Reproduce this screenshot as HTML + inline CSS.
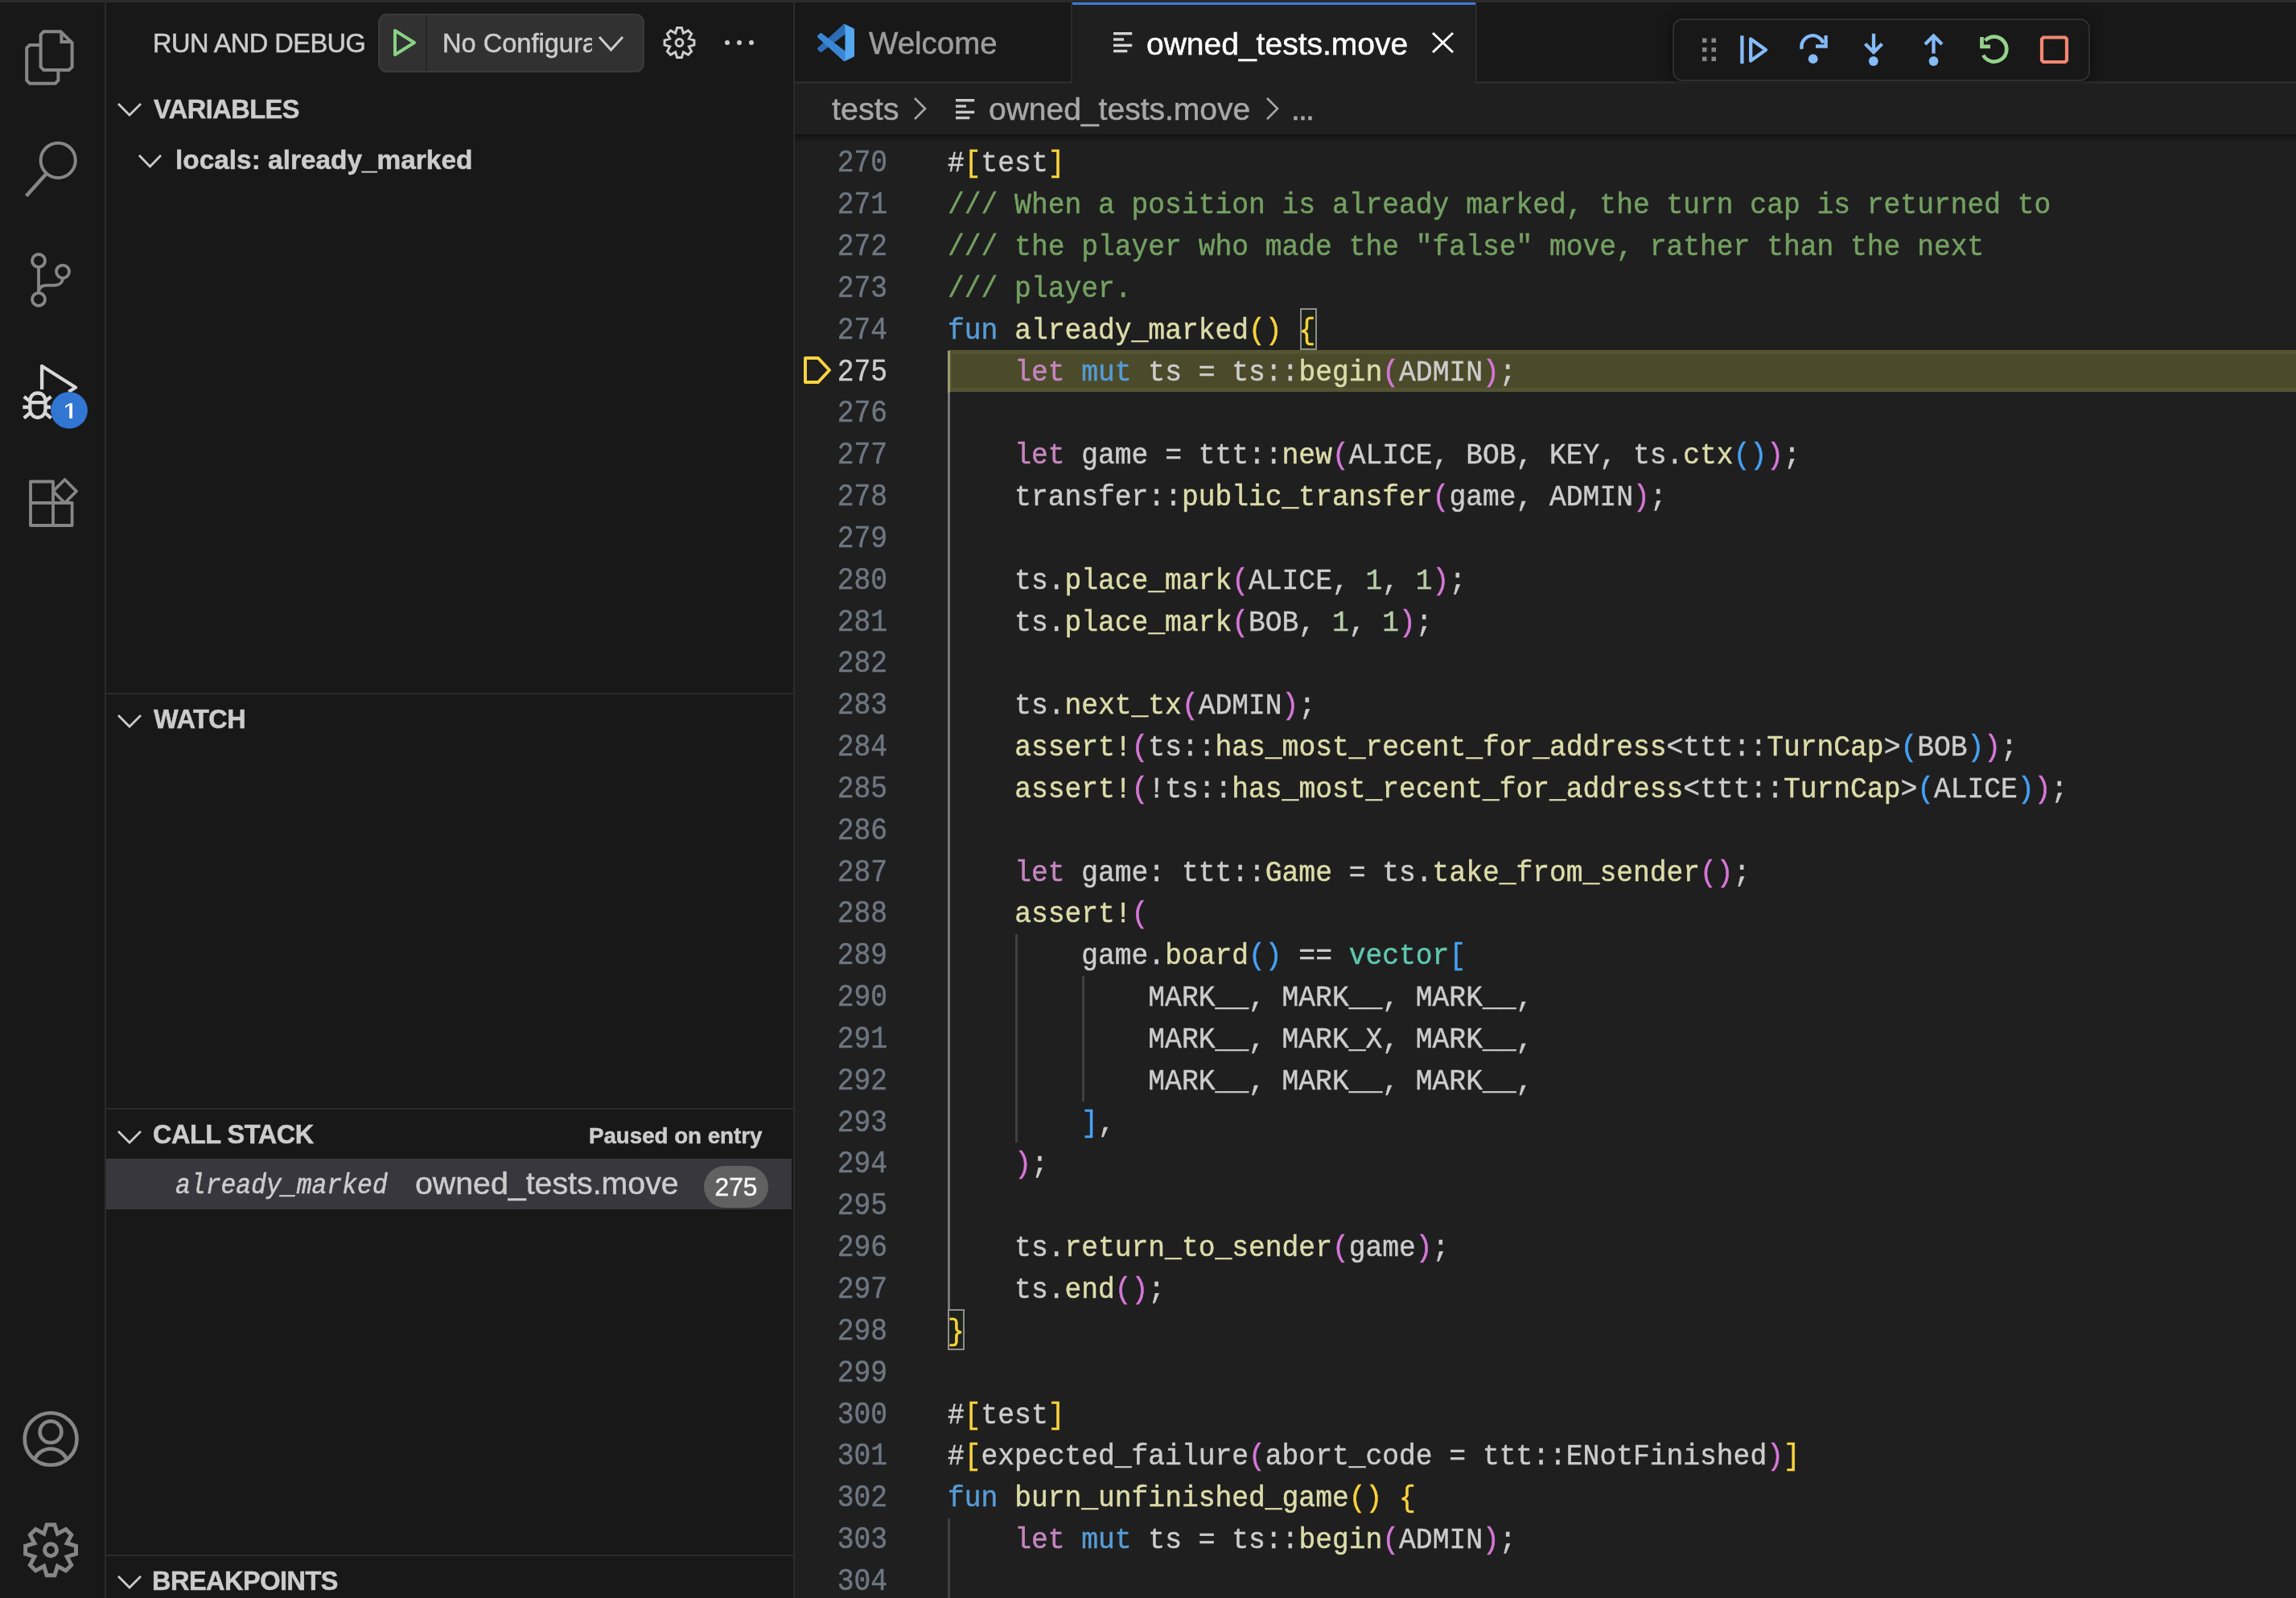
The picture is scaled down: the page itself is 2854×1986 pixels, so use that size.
<!DOCTYPE html>
<html><head><meta charset="utf-8">
<style>
*{margin:0;padding:0;box-sizing:border-box}
html,body{width:2854px;height:1986px;overflow:hidden;background:#181818;font-family:"Liberation Sans",sans-serif;color:#cccccc}
.a{position:absolute}
#topline{left:0;top:0;width:2854px;height:3px;background:#2b2b2b}
#actbar{left:0;top:3px;width:130px;height:1983px;background:#181818;border-right:2px solid #2b2b2b;width:132px}
#sidebar{left:132px;top:3px;width:854px;height:1983px;background:#181818;border-right:2px solid #2b2b2b;width:856px}
#tabbar{left:988px;top:3px;width:1866px;height:101px;background:#181818}
#tabbar .bb{left:0;top:98px;width:1866px;height:3px;background:#2b2b2b}
#crumbs{left:988px;top:104px;width:1866px;height:63px;background:#1f1f1f}
#editor{left:988px;top:167px;width:1866px;height:1819px;background:#1f1f1f;overflow:hidden}
#editor .shadow{left:0;top:0;width:1866px;height:10px;background:linear-gradient(#121212,rgba(31,31,31,0))}
.hdr{font-weight:bold;font-size:32.5px;letter-spacing:-0.5px;color:#cccccc;white-space:nowrap}
.code{font-family:"Liberation Mono",monospace;font-size:34.64px;line-height:51.84px;white-space:pre;color:#cccccc}

.ln{-webkit-text-stroke:0.45px currentColor;will-change:transform;transform:scaleY(1.12);transform-origin:0 36.9px;left:0;width:115px;text-align:right;font-family:"Liberation Mono",monospace;font-size:34.64px;line-height:51.84px;color:#6e7681;height:51.84px;padding-top:1.8px}
.ln.act{color:#cccccc}
.cl{-webkit-text-stroke:0.45px currentColor;will-change:transform;transform:scaleY(1.07);transform-origin:0 36.9px;left:190px;font-family:"Liberation Mono",monospace;font-size:34.64px;line-height:51.84px;white-space:pre;color:#cccccc;height:51.84px;padding-top:1.8px}
.hl{left:190px;width:1676px;background:#4b4b2b;border:5px solid #555432;border-right:none}
.ig{width:3px;background:#404040}
.bm{border:2.2px solid #8e8e8e;background:#1d231b}

.t{position:absolute;white-space:nowrap;line-height:1;will-change:transform;-webkit-text-stroke:0.5px currentColor}
.sep{position:absolute;left:132px;width:854px;height:2px;background:#2b2b2b}
</style></head><body>
<div id="topline" class="a"></div>
<div id="actbar" class="a">
<svg class="a" style="left:0;top:-3px" width="130" height="700" viewBox="0 0 130 700">
 <g fill="none" stroke="#868686" stroke-width="4" stroke-linejoin="miter">
  <path d="M50.6 55.9 H37 L33.2 59.7 V100 L37 103.8 H68.6 L72.4 100 V88.9"/>
  <path d="M54.4 39.2 H75.4 L89.6 53.4 V83.1 L85.8 86.9 H54.4 L50.6 83.1 V43 Z"/>
  <path d="M76.4 39.2 V51.9 H89.6"/>
  <circle cx="72.2" cy="199.3" r="21.6"/>
  <path d="M57.5 216 L32.7 243.5" stroke-width="4.6"/>
  <circle cx="48" cy="324" r="8" stroke-width="3.8"/>
  <circle cx="48" cy="372" r="8" stroke-width="3.8"/>
  <circle cx="78" cy="337.6" r="8" stroke-width="3.8"/>
  <path d="M48 332 V364" stroke-width="3.8"/>
  <path d="M78 345.6 C78 351 74 354.6 67 354.6 H58 C52 354.6 48 357.5 48 364" stroke-width="3.8"/>
  <path d="M38 598.5 H66 V653 H38 Z M38 625 H89.6 V653 H66 M80.5 596 L95 610.5 L80.5 625 L66 610.5 Z" stroke-width="3.8" stroke-linejoin="round"/>
 </g>
 <g fill="none" stroke="#d7d7d7" stroke-width="4.3">
  <path d="M52.1 484 V455 L94 481.5 L85.4 487" stroke-linejoin="round"/>
  <path d="M37.3 499.5 C37.3 492 41.5 488.5 46.9 488.5 C52.3 488.5 56.5 492 56.5 499.5 V508 C56.5 514.5 52.3 519 46.9 519 C41.5 519 37.3 514.5 37.3 508 Z"/>
  <path d="M37.3 500.2 H56.5 M28.3 506 H36 M57.5 506 H63 M29.8 493 L37 498.5 M63.5 493 L56.5 498.5 M29.8 519.7 L37 513.5 M63.5 519.7 L56.5 513.5"/>
 </g>
 <circle cx="86" cy="509.9" r="22.9" fill="#3176d2"/>
 <path d="M81.3 507.2 L86.2 503.2 V520 H90 V501.2 H86.6 L81.3 504.2 Z" fill="#ffffff"/>
</svg>
<svg class="a" style="left:0;top:1697px" width="130" height="289" viewBox="0 1700 130 289">
 <g fill="none" stroke="#868686" stroke-width="4.6">
  <circle cx="63.1" cy="1788.4" r="32.4"/>
  <circle cx="63" cy="1779.6" r="13.4"/>
  <path d="M43.5 1812.5 A21.8 21.8 0 0 1 82.5 1812.5"/>
  <path d="M58.14 1894.88 L67.96 1894.88 L71.39 1906.16 L81.80 1900.61 L88.74 1907.55 L83.19 1917.96 L94.47 1921.39 L94.47 1931.21 L83.19 1934.64 L88.74 1945.05 L81.80 1951.99 L71.39 1946.44 L67.96 1957.72 L58.14 1957.72 L54.71 1946.44 L44.30 1951.99 L37.36 1945.05 L42.91 1934.64 L31.63 1931.21 L31.63 1921.39 L42.91 1917.96 L37.36 1907.55 L44.30 1900.61 L54.71 1906.16 Z" stroke-width="5" stroke-linejoin="miter" stroke-miterlimit="10"/>
  <circle cx="63.05" cy="1926.3" r="7.5" stroke-width="5"/>
 </g>
</svg>
</div>
<div id="sidebar" class="a"></div>
<div class="t" style="left:190px;top:37.5px;font-size:32.6px;letter-spacing:-0.55px;color:#cccccc">RUN AND DEBUG</div>
<div class="a" style="left:470px;top:17px;width:331px;height:73px;background:#313131;border:2px solid #3a3a3a;border-radius:11px"></div>
<div class="a" style="left:529px;top:19px;width:2px;height:69px;background:#262626"></div>
<svg class="a" style="left:480px;top:28px" width="50" height="50"><path d="M11 10 L35 25 L11 40 Z" fill="none" stroke="#89d185" stroke-width="4" stroke-linejoin="round"/></svg>
<div class="a" style="left:550px;top:30px;width:186px;height:50px;overflow:hidden"><div class="t" style="left:0;top:7.5px;font-size:32.6px;color:#cccccc">No Configuration</div></div>
<svg class="a" style="left:742px;top:43px" width="35" height="22"><path d="M3 3 L17.5 19 L32 3" fill="none" stroke="#cccccc" stroke-width="3"/></svg>
<svg class="a" style="left:819px;top:28px" width="52" height="52" viewBox="819 28 52 52"><g fill="none" stroke="#cccccc" stroke-width="3"><path d="M841.62 34.59 L847.38 34.59 L849.39 41.20 L855.48 37.95 L859.55 42.02 L856.30 48.11 L862.91 50.12 L862.91 55.88 L856.30 57.89 L859.55 63.98 L855.48 68.05 L849.39 64.80 L847.38 71.41 L841.62 71.41 L839.61 64.80 L833.52 68.05 L829.45 63.98 L832.70 57.89 L826.09 55.88 L826.09 50.12 L832.70 48.11 L829.45 42.02 L833.52 37.95 L839.61 41.20 Z" stroke-linejoin="miter" stroke-miterlimit="10"/><circle cx="844.5" cy="53" r="4.4"/></g></svg>
<div class="a" style="left:901px;top:49.7px;width:6px;height:6px;border-radius:3px;background:#cccccc"></div>
<div class="a" style="left:916px;top:49.7px;width:6px;height:6px;border-radius:3px;background:#cccccc"></div>
<div class="a" style="left:931px;top:49.7px;width:6px;height:6px;border-radius:3px;background:#cccccc"></div>
<svg class="a" style="left:144px;top:126px" width="34" height="20"><path d="M3 3 L17.0 17 L31 3" fill="none" stroke="#cccccc" stroke-width="2.8"/></svg>
<div class="t hdr" style="left:191px;top:119.6px">VARIABLES</div>
<svg class="a" style="left:170px;top:190px" width="33" height="20"><path d="M3 3 L16.5 17 L30 3" fill="none" stroke="#cccccc" stroke-width="2.8"/></svg>
<div class="t" style="left:218px;top:182px;font-size:33.4px;font-weight:bold;color:#cccccc">locals: already_marked</div>
<div class="sep" style="top:861px"></div>
<svg class="a" style="left:144px;top:886px" width="34" height="20"><path d="M3 3 L17.0 17 L31 3" fill="none" stroke="#cccccc" stroke-width="2.8"/></svg>
<div class="t hdr" style="left:191px;top:877.6px">WATCH</div>
<div class="sep" style="top:1377px"></div>
<svg class="a" style="left:144px;top:1403px" width="34" height="20"><path d="M3 3 L17.0 17 L31 3" fill="none" stroke="#cccccc" stroke-width="2.8"/></svg>
<div class="t hdr" style="left:190px;top:1393.6px">CALL STACK</div>
<div class="t" style="left:732px;top:1398px;font-size:27.7px;font-weight:bold;color:#cccccc">Paused on entry</div>
<div class="a" style="left:132px;top:1440px;width:852px;height:62.5px;background:#37373d"></div>
<div class="t" style="left:218px;top:1459px;transform:scaleY(1.1);transform-origin:0 24px;font-family:'Liberation Mono',monospace;font-style:italic;font-size:31.4px;color:#cccccc">already_marked</div>
<div class="t" style="left:516px;top:1451px;font-size:39.3px;color:#cccccc">owned_tests.move</div>
<div class="a" style="left:875px;top:1449px;width:80px;height:52px;border-radius:26px;background:#616161"></div>
<div class="t" style="left:875px;width:80px;text-align:center;top:1459.5px;font-size:31.7px;color:#f8f8f8">275</div>
<div class="sep" style="top:1932px"></div>
<svg class="a" style="left:144px;top:1956px" width="34" height="20"><path d="M3 3 L17.0 17 L31 3" fill="none" stroke="#cccccc" stroke-width="2.8"/></svg>
<div class="t hdr" style="left:189px;top:1948.6px">BREAKPOINTS</div>

<div id="tabbar" class="a"><div class="a bb"></div></div>
<div class="a" style="left:1331px;top:3px;width:2px;height:98px;background:#2b2b2b"></div>
<div class="a" style="left:1333px;top:3px;width:501px;height:101px;background:#1f1f1f"></div>
<div class="a" style="left:1333px;top:3px;width:501px;height:3px;background:#3a7dd7"></div>
<div class="a" style="left:1834px;top:3px;width:2px;height:98px;background:#2b2b2b"></div>
<svg class="a" style="left:1016px;top:30px" width="46" height="46" viewBox="0 0 100 100">
<path fill="#2c6cb3" d="M96.4614 10.7962L75.8569 0.875542C73.4719 -0.272773 70.6217 0.211611 68.75 2.08333L1.29858 63.5832C-0.515693 65.2373 -0.513607 68.0937 1.30308 69.7452L6.81272 74.754C8.29793 76.1042 10.5347 76.2036 12.1338 74.9905L93.3609 13.3699C96.086 11.3026 100 13.2462 100 16.6667V16.4275C100 14.0265 98.6246 11.8378 96.4614 10.7962Z"/>
<path fill="#3a86d4" d="M96.4614 89.2038L75.8569 99.1245C73.4719 100.273 70.6217 99.7884 68.75 97.9167L1.29858 36.4169C-0.515693 34.7627 -0.513607 31.9063 1.30308 30.2548L6.81272 25.246C8.29793 23.8958 10.5347 23.7964 12.1338 25.0095L93.3609 86.6301C96.086 88.6974 100 86.7538 100 83.3334V83.5726C100 85.9735 98.6246 88.1622 96.4614 89.2038Z"/>
<path fill="#52a7ef" d="M75.8578 99.1263C73.4721 100.274 70.6219 99.7885 68.75 97.9166C71.0564 100.223 75 98.5895 75 95.3278V4.67213C75 1.41039 71.0564 -0.223106 68.75 2.08329C70.6219 0.211402 73.4721 -0.273666 75.8578 0.873633L96.4587 10.7807C98.6234 11.8217 100 14.0112 100 16.4132V83.5871C100 85.9893 98.6234 88.1788 96.4586 89.2198L75.8578 99.1263Z"/>
</svg>
<div class="t" style="left:1080px;top:34.5px;font-size:38.5px;color:#9d9d9d">Welcome</div>
<svg class="a" style="left:1384px;top:40px" width="24" height="26"><g fill="#d4d4d4"><rect x="0" y="0" width="23.2" height="3.4"/><rect x="0" y="7.3" width="13" height="3.4"/><rect x="0" y="14.7" width="23.2" height="3.4"/><rect x="0" y="21.8" width="17.3" height="3.4"/></g></svg>
<div class="t" style="left:1425px;top:34.5px;font-size:39px;color:#ffffff">owned_tests.move</div>
<svg class="a" style="left:1778px;top:38px" width="31" height="30"><path d="M3 3 L28 27 M28 3 L3 27" stroke="#ffffff" stroke-width="3" fill="none"/></svg>
<div class="a" style="left:2079px;top:23px;width:519px;height:78px;background:#181818;border:2px solid #2e2e2e;border-radius:12px;box-shadow:0 0 14px rgba(0,0,0,0.55)"></div>
<svg class="a" style="left:2100px;top:30px" width="490" height="65" viewBox="2100 30 490 65">
 <g fill="#868686"><rect x="2116" y="47.5" width="5.5" height="5.5"/><rect x="2127.5" y="47.5" width="5.5" height="5.5"/><rect x="2116" y="59" width="5.5" height="5.5"/><rect x="2127.5" y="59" width="5.5" height="5.5"/><rect x="2116" y="70.5" width="5.5" height="5.5"/><rect x="2127.5" y="70.5" width="5.5" height="5.5"/></g>
 <g fill="none" stroke="#85bbf7" stroke-width="4.3">
  <path d="M2165.4 44.3 V79.1"/>
  <path d="M2176.2 48.5 L2195 62 L2176.2 75.5 Z" stroke-linejoin="round"/>
  <path d="M2239.6 61 A14 14 0 0 1 2266.5 53.5"/>
  <path d="M2257 57.5 H2269.6 V44" stroke-linejoin="miter"/>
  <path d="M2329 41.8 V64 M2318.5 54.5 L2329 65 L2339.5 54.5"/>
  <path d="M2403.5 66.6 V45 M2393 55 L2403.5 44.5 L2414 55"/>
 </g>
 <g fill="none" stroke="#95d28c" stroke-width="4.7">
  <path d="M2467.6 50.5 A15.45 15.45 0 1 1 2465.2 68.5"/>
  <path d="M2463.5 46 V57.8 H2474" stroke-linejoin="miter"/>
 </g>
 <g fill="#85bbf7"><circle cx="2253.7" cy="73.2" r="5.9"/><circle cx="2328.8" cy="76" r="5.9"/><circle cx="2403.5" cy="76" r="5.9"/></g>
 <path d="M2540 46.5 H2567 L2569 48.5 V75 L2567 77 H2540 L2538 75 V48.5 Z" fill="none" stroke="#f48771" stroke-width="4.2"/>
</svg>
<div id="crumbs" class="a"></div>
<div class="t" style="left:1034px;top:115.5px;font-size:39.6px;color:#a8a8a8">tests</div>
<svg class="a" style="left:1134px;top:119px" width="19" height="32"><path d="M3 3 L16 16.0 L3 29" fill="none" stroke="#a8a8a8" stroke-width="2.6"/></svg>
<svg class="a" style="left:1188px;top:122.5px" width="24" height="26"><g fill="#c8c8c8"><rect x="0" y="0" width="23.2" height="3.4"/><rect x="0" y="7.3" width="13" height="3.4"/><rect x="0" y="14.7" width="23.2" height="3.4"/><rect x="0" y="21.8" width="17.3" height="3.4"/></g></svg>
<div class="t" style="left:1229px;top:115.5px;font-size:39px;color:#a8a8a8">owned_tests.move</div>
<svg class="a" style="left:1572px;top:119px" width="19" height="32"><path d="M3 3 L16 16.0 L3 29" fill="none" stroke="#a8a8a8" stroke-width="2.6"/></svg>
<div class="t" style="left:1605px;top:115.5px;font-size:39px;letter-spacing:-1.8px;color:#a8a8a8">...</div>
<div id="editor" class="a">
<div class="a hl" style="top:267.5px;height:52.2px"></div>
<div class="a ig" style="left:190px;top:268.6px;height:1191px;background:#777777"></div>
<div class="a ig" style="left:190px;top:268.6px;height:52px;background:#9a9a70"></div>
<div class="a ig" style="left:274px;top:994.3px;height:259.2px"></div>
<div class="a ig" style="left:357px;top:1046.1px;height:155.5px"></div>
<div class="a ig" style="left:190px;top:1720px;height:110px"></div>
<div class="a bm" style="left:628px;top:215.8px;width:20.5px;height:52px"></div>
<div class="a bm" style="left:190px;top:1460.2px;width:20.8px;height:51.2px"></div>
<svg class="a" style="left:9px;top:274px" width="38" height="40" viewBox="0 0 38 40"><path d="M4 4 H20 L34 19 L20 34 H4 Z" fill="none" stroke="#fcd440" stroke-width="3.9" stroke-linejoin="round"/></svg>
<div class="a ln" style="top:9.30px">270</div>
<div class="a cl" style="top:9.30px">#<span style="color:#f9d33c">[</span>test<span style="color:#f9d33c">]</span></div>
<div class="a ln" style="top:61.14px">271</div>
<div class="a cl" style="top:61.14px"><span style="color:#74a062">/// When a position is already marked, the turn cap is returned to</span></div>
<div class="a ln" style="top:112.98px">272</div>
<div class="a cl" style="top:112.98px"><span style="color:#74a062">/// the player who made the "false" move, rather than the next</span></div>
<div class="a ln" style="top:164.82px">273</div>
<div class="a cl" style="top:164.82px"><span style="color:#74a062">/// player.</span></div>
<div class="a ln" style="top:216.66px">274</div>
<div class="a cl" style="top:216.66px"><span style="color:#569cd6">fun</span> <span style="color:#dcdcaa">already_marked</span><span style="color:#f9d33c">()</span> <span style="color:#f9d33c">{</span></div>
<div class="a ln act" style="top:268.50px">275</div>
<div class="a cl" style="top:268.50px">    <span style="color:#c586c0">let</span> <span style="color:#569cd6">mut</span> ts = ts::<span style="color:#dcdcaa">begin</span><span style="color:#d677d8">(</span>ADMIN<span style="color:#d677d8">)</span>;</div>
<div class="a ln" style="top:320.34px">276</div>
<div class="a cl" style="top:320.34px"></div>
<div class="a ln" style="top:372.18px">277</div>
<div class="a cl" style="top:372.18px">    <span style="color:#c586c0">let</span> game = ttt::<span style="color:#dcdcaa">new</span><span style="color:#d677d8">(</span>ALICE, BOB, KEY, ts.<span style="color:#dcdcaa">ctx</span><span style="color:#45a1f6">()</span><span style="color:#d677d8">)</span>;</div>
<div class="a ln" style="top:424.02px">278</div>
<div class="a cl" style="top:424.02px">    transfer::<span style="color:#dcdcaa">public_transfer</span><span style="color:#d677d8">(</span>game, ADMIN<span style="color:#d677d8">)</span>;</div>
<div class="a ln" style="top:475.86px">279</div>
<div class="a cl" style="top:475.86px"></div>
<div class="a ln" style="top:527.70px">280</div>
<div class="a cl" style="top:527.70px">    ts.<span style="color:#dcdcaa">place_mark</span><span style="color:#d677d8">(</span>ALICE, <span style="color:#b5cea8">1</span>, <span style="color:#b5cea8">1</span><span style="color:#d677d8">)</span>;</div>
<div class="a ln" style="top:579.54px">281</div>
<div class="a cl" style="top:579.54px">    ts.<span style="color:#dcdcaa">place_mark</span><span style="color:#d677d8">(</span>BOB, <span style="color:#b5cea8">1</span>, <span style="color:#b5cea8">1</span><span style="color:#d677d8">)</span>;</div>
<div class="a ln" style="top:631.38px">282</div>
<div class="a cl" style="top:631.38px"></div>
<div class="a ln" style="top:683.22px">283</div>
<div class="a cl" style="top:683.22px">    ts.<span style="color:#dcdcaa">next_tx</span><span style="color:#d677d8">(</span>ADMIN<span style="color:#d677d8">)</span>;</div>
<div class="a ln" style="top:735.06px">284</div>
<div class="a cl" style="top:735.06px">    <span style="color:#dcdcaa">assert!</span><span style="color:#d677d8">(</span>ts::<span style="color:#dcdcaa">has_most_recent_for_address</span>&lt;ttt::<span style="color:#dcdcaa">TurnCap</span>&gt;<span style="color:#45a1f6">(</span>BOB<span style="color:#45a1f6">)</span><span style="color:#d677d8">)</span>;</div>
<div class="a ln" style="top:786.90px">285</div>
<div class="a cl" style="top:786.90px">    <span style="color:#dcdcaa">assert!</span><span style="color:#d677d8">(</span>!ts::<span style="color:#dcdcaa">has_most_recent_for_address</span>&lt;ttt::<span style="color:#dcdcaa">TurnCap</span>&gt;<span style="color:#45a1f6">(</span>ALICE<span style="color:#45a1f6">)</span><span style="color:#d677d8">)</span>;</div>
<div class="a ln" style="top:838.74px">286</div>
<div class="a cl" style="top:838.74px"></div>
<div class="a ln" style="top:890.58px">287</div>
<div class="a cl" style="top:890.58px">    <span style="color:#c586c0">let</span> game: ttt::<span style="color:#dcdcaa">Game</span> = ts.<span style="color:#dcdcaa">take_from_sender</span><span style="color:#d677d8">()</span>;</div>
<div class="a ln" style="top:942.42px">288</div>
<div class="a cl" style="top:942.42px">    <span style="color:#dcdcaa">assert!</span><span style="color:#d677d8">(</span></div>
<div class="a ln" style="top:994.26px">289</div>
<div class="a cl" style="top:994.26px">        game.<span style="color:#dcdcaa">board</span><span style="color:#45a1f6">()</span> == <span style="color:#5fc7ae">vector</span><span style="color:#45a1f6">[</span></div>
<div class="a ln" style="top:1046.10px">290</div>
<div class="a cl" style="top:1046.10px">            MARK__, MARK__, MARK__,</div>
<div class="a ln" style="top:1097.94px">291</div>
<div class="a cl" style="top:1097.94px">            MARK__, MARK_X, MARK__,</div>
<div class="a ln" style="top:1149.78px">292</div>
<div class="a cl" style="top:1149.78px">            MARK__, MARK__, MARK__,</div>
<div class="a ln" style="top:1201.62px">293</div>
<div class="a cl" style="top:1201.62px">        <span style="color:#45a1f6">]</span>,</div>
<div class="a ln" style="top:1253.46px">294</div>
<div class="a cl" style="top:1253.46px">    <span style="color:#d677d8">)</span>;</div>
<div class="a ln" style="top:1305.30px">295</div>
<div class="a cl" style="top:1305.30px"></div>
<div class="a ln" style="top:1357.14px">296</div>
<div class="a cl" style="top:1357.14px">    ts.<span style="color:#dcdcaa">return_to_sender</span><span style="color:#d677d8">(</span>game<span style="color:#d677d8">)</span>;</div>
<div class="a ln" style="top:1408.98px">297</div>
<div class="a cl" style="top:1408.98px">    ts.<span style="color:#dcdcaa">end</span><span style="color:#d677d8">()</span>;</div>
<div class="a ln" style="top:1460.82px">298</div>
<div class="a cl" style="top:1460.82px"><span style="color:#f9d33c">}</span></div>
<div class="a ln" style="top:1512.66px">299</div>
<div class="a cl" style="top:1512.66px"></div>
<div class="a ln" style="top:1564.50px">300</div>
<div class="a cl" style="top:1564.50px">#<span style="color:#f9d33c">[</span>test<span style="color:#f9d33c">]</span></div>
<div class="a ln" style="top:1616.34px">301</div>
<div class="a cl" style="top:1616.34px">#<span style="color:#f9d33c">[</span>expected_failure<span style="color:#d677d8">(</span>abort_code = ttt::ENotFinished<span style="color:#d677d8">)</span><span style="color:#f9d33c">]</span></div>
<div class="a ln" style="top:1668.18px">302</div>
<div class="a cl" style="top:1668.18px"><span style="color:#569cd6">fun</span> <span style="color:#dcdcaa">burn_unfinished_game</span><span style="color:#f9d33c">()</span> <span style="color:#f9d33c">{</span></div>
<div class="a ln" style="top:1720.02px">303</div>
<div class="a cl" style="top:1720.02px">    <span style="color:#c586c0">let</span> <span style="color:#569cd6">mut</span> ts = ts::<span style="color:#dcdcaa">begin</span><span style="color:#d677d8">(</span>ADMIN<span style="color:#d677d8">)</span>;</div>
<div class="a ln" style="top:1771.86px">304</div>
<div class="a cl" style="top:1771.86px"></div>
<div class="a shadow"></div></div>
</body></html>
